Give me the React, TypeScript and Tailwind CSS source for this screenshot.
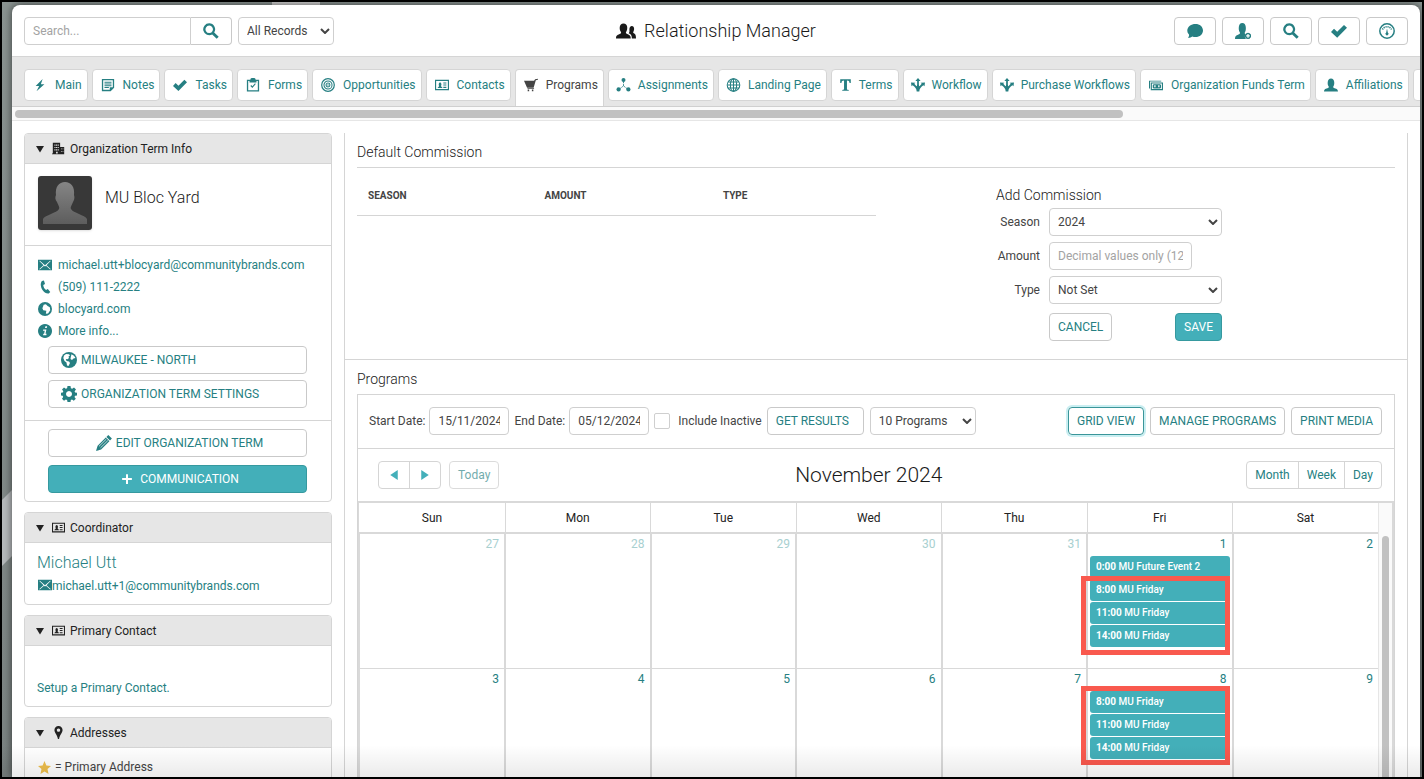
import type { ReactNode } from "react";

const icons: Record<string, ReactNode> = {
  bolt: <path d="M11 1 3 9h4l-3 6 9-8H9z" />,
  notes: (
    <path
      fillRule="evenodd"
      d="M1 1h14v10l-4 4H1zm1.500 1.500v11h7.500v-3h3.500v-8zM4 4.200h8v1.100H4zm0 2h8v1.100H4zm0 2h8v1.100H4zm0 2h5v1.100H4z"
    />
  ),
  check: <path d="m0 9 3-3.200L6.200 8.800 13 2l3 2.800L6.200 14.800z" />,
  clipboard: (
    <path
      fillRule="evenodd"
      d="M1 2h4c0-1 .8-2 1.500-2h3C10.200 0 11 1 11 2h4v13.500H1zm1.500 1.500V14h11V3.500h-1.500V5H4V3.500zM5 9l.9-.9 1.400 1.400L10.300 6l.9.8-3.900 4.500z"
    />
  ),
  target: (
    <g fill="none" stroke="currentColor">
      <circle cx="8" cy="8" r="7.200" strokeWidth="1.400" />
      <circle cx="8" cy="8" r="4.600" strokeWidth="1.200" />
      <circle cx="8" cy="8" r="2.200" strokeWidth="1.200" />
      <circle cx="8" cy="8" r=".8" fill="currentColor" stroke="none" />
    </g>
  ),
  card: (
    <path
      fillRule="evenodd"
      d="M0 2h16v12H0zm1.300 1.300v9.400h13.400V3.300zM3 11.500c0-1.600 1.700-1.300 1.700-2.500C4 8 4 5 5.800 5S7.600 8 6.900 9c0 1.200 1.700.9 1.700 2.500zM9.500 5H13v1.300H9.500zm0 2.500H13v1.200H9.500zm0 2.500H13v1.300H9.500z"
    />
  ),
  cart: (
    <path d="M0 3h11.500l1.200-1.600 3-.6.300 1.100-2.500.7L11 11H3.500zM4 11.700h7.500v1H4zM4.200 13.200h1.700V15H4.200zm4.800 0h1.700V15H9z" />
  ),
  nodes: (
    <g>
      <circle cx="8" cy="2.400" r="2.300" />
      <circle cx="2.400" cy="13" r="2.400" />
      <circle cx="13.600" cy="13" r="2.400" />
      <path d="M8 4v5l-5 4m5-4 5 4" fill="none" stroke="currentColor" strokeDasharray="2 1" />
    </g>
  ),
  globe: (
    <g fill="none" stroke="currentColor" strokeWidth="1.200">
      <circle cx="8" cy="8" r="7.200" />
      <ellipse cx="8" cy="8" rx="3.600" ry="7.200" />
      <path d="M8 1v14M1 8h14M2 4.500h12M2 11.500h12" />
    </g>
  ),
  letter: (
    <path d="M1.500 1h13v4.500H13C12.800 3.500 12 2.600 9.800 2.600v10.200c0 .8.700 1 2.200 1.200v1H4v-1c1.500-.2 2.200-.4 2.200-1.200V2.600C4 2.600 3.200 3.500 3 5.500H1.500z" />
  ),
  workflow: (
    <path d="m8 0 3 3.500H9V7c0 1.500.3 2 1 2.300C11 8 11.500 7.300 12.300 6.700L11 5.300l5-.3-.6 4.500-1.300-1.200C11.500 10.500 9.500 12 9.500 15.500h-3C6.500 12 4.500 10.500 1.900 8.300L.6 9.500 0 5l5 .3-1.300 1.400C4.500 7.300 5 8 6 9.300 6.700 9 7 8.500 7 7V3.500H5z" />
  ),
  money: (
    <path
      fillRule="evenodd"
      d="M0 3h14v1H1.200v8H0zm2 2h14v9H2zm1.300 1.300v6.400h11.400V6.300zM4.300 8l1-1h7.400l1 1v3l-1 1H5.300l-1-1zM6 8.300v2.400h1.500V8.300zm4.500 0v2.400H12V8.300z"
    />
  ),
  user: (
    <path d="M0 15.500c.2-3.500 2-3 5-4.500.6-.4.700-1.200 0-2C3.800 7.500 3.400.5 8 .5S12.200 7.500 11 9c-.7.8-.6 1.600 0 2 3 1.500 4.800 1 5 4.500z" />
  ),
  userAdd: (
    <g>
      <path d="M0 16c.2-3.800 1.500-3.500 4.500-5 .6-.4.700-1.300 0-2.200C3.400 7 3 0 7.300 0s4 7 2.900 8.800c-.8 1-.5 1.900.2 2.300-.8 1.500-.7 3.400.6 4.900z" />
      <path
        fillRule="evenodd"
        d="M13 9.800a3.100 3.100 0 1 0 .01 0zm-.6 1.300h1.200v1.200h1.200v1.200h-1.200v1.200h-1.200v-1.200h-1.200v-1.200h1.200z"
      />
    </g>
  ),
  users: (
    <path d="M0 14c0-3 1.500-2.700 3.700-4 .5-.3.500-1 0-1.600C2.600 6.800 2.300 2 6 2s3.400 4.800 2.300 6.400c-.5.6-.5 1.300 0 1.600 2.200 1.300 3.400 1 3.500 4zm12.700 0c0-2.500-.8-3.600-2.500-4.300.8-1 .6-1.700.5-2.800 0-2 .8-2.900 2-2.900 2.300 0 2 3.300 1.300 4.400-.4.600-.3 1 0 1.200 1.500.9 2 1.400 2 4.400z" />
  ),
  search: (
    <path
      fillRule="evenodd"
      d="M6.200.3a6 6 0 0 1 5 9.200l4.500 4.200-2 2.100-4.500-4.300A6 6 0 1 1 6.200.3zm0 2.300a3.700 3.700 0 1 0 .01 0z"
    />
  ),
  comment: (
    <path d="M8.500 1C12.700 1 16 3.700 16 7.500S12.700 14 8.500 14c-1.200 0-2.200-.2-3.200-.6-1.200.9-3 1.500-4.500 1.300C2 13.800 2.200 12.800 2 11.500.8 10.400.3 9 .3 7.500.3 3.700 4.200 1 8.500 1z" />
  ),
  gauge: (
    <g>
      <circle cx="8" cy="8" r="7.200" fill="none" stroke="currentColor" strokeWidth="1.500" />
      <path
        d="M3.500 6.500A5 5 0 0 1 12.500 6.500"
        fill="none"
        stroke="currentColor"
        strokeWidth="1.600"
        strokeDasharray="1.200 .8"
      />
      <path d="m8 5.500.8 4a1.500 1.500 0 1 1-1.600 0z" />
    </g>
  ),
  building: (
    <path
      fillRule="evenodd"
      d="M1 1h9v5h5v9H0v-1h1zm2 2v1.500h1.300V3zm2 0v1.500h1.300V3zm2 0v1.500h1.300V3zM3 6v1.500h1.300V6zm2 0v1.500h1.300V6zm2 0v1.500h1.300V6zM3 9v1.500h1.300V9zm2 0v1.500h1.300V9zm2 0v1.500h1.300V9zm4-1v1h1V8zm2 0v1h1V8zm-2 3v1h1v-1zm2 0v1h1v-1zm-8 1v2h2v-2z"
    />
  ),
  mail: (
    <path
      fillRule="evenodd"
      d="M0 2h16v12H0zm1.500 1.500 4.800 4.700-4.800 4.300.5.500 4.900-4.200L8 9.700l1.100-.9 4.900 4.200.5-.5-4.800-4.300 4.800-4.700-.6-.5L8 8.300 2.100 3z"
    />
  ),
  phone: (
    <path d="M4.500 1 6.800.5 8 4.500l-2 1.200c.2 2.400 1.400 4.500 3.200 5.700l2-1L14 13.800 12.300 15.500C6 16.500.5 6 4.500 1z" />
  ),
  earth: (
    <g>
      <circle cx="8" cy="8" r="8" />
      <path
        fill="#fff"
        d="M3 3.500 5 2l3 .3 1 1.200-1.500 1L8 6 6.500 7.200 4.800 7 5.500 9l2.500.5 1 1.500-1.500 3L6 13.500 5.500 10.500 3.500 9 2.300 6zM10.500 2.300l2.500 1.500L14.500 6l-2 .5L11 8l-1.500-1 .3-2z"
      />
    </g>
  ),
  globeLink: (
    <g>
      <circle cx="8" cy="8" r="8" />
      <path fill="#fff" d="M6.500 3 9 2.500l2 2 2.500 1.500.5 3.500-2.500 3.500L9 13.500 9.500 10 6 9.500 5 7z" />
    </g>
  ),
  info: (
    <path
      fillRule="evenodd"
      d="M8 0a8 8 0 1 0 .01 0zm.5 2.500h2l-.5 2.200H8zM6 6.200h3.600l-1 5h1.200l-.3 1.600H5.800l.3-1.600h.9l.7-3.400H5.700z"
    />
  ),
  gear: (
    <path
      fillRule="evenodd"
      d="M6.500 0h3l.4 2.200 1.300.5L13 1.400 15 3.500l-1.400 1.700.5 1.300 1.900.2v2.800l-1.900.3-.6 1.300 1.300 1.700-2 2-1.800-1.200-1.200.5L9.500 16h-3l-.4-2-1.300-.4L3 14.800l-2-2 1.200-1.700-.5-1.300L0 9.500V6.700l1.800-.3.500-1.200L1 3.500l2-2 1.700 1.200 1.400-.5zM8 5a3 3 0 1 0 .01 0z"
    />
  ),
  pencil: (
    <g>
      <path d="m12.300 0 3.600 3.500-1.900 2L10.400 2zM9.800 2.600l3.600 3.600-8.300 8.200L0 16l1.600-5.200z" />
      <path d="m3 11.300 7.300-7.200M4.500 12.800l7.300-7.200" stroke="#fff" strokeWidth=".7" />
    </g>
  ),
  plus: <path d="M6.700 1.500h2.600v5.200h5.200v2.600H9.300v5.200H6.700V9.300H1.500V6.700h5.200z" />,
  pin: (
    <path
      fillRule="evenodd"
      d="M8 0c3 0 5 2.200 5 5 0 3.500-3.500 6-4.300 11H7.300C6.500 11 3 8.500 3 5c0-2.800 2-5 5-5zm0 3a2.100 2.100 0 1 0 .01 0z"
    />
  ),
  star: <path d="m8 0 2.300 5.400 5.700.6-4.300 3.900L13 16l-5-3.200L3 16l1.300-6.100L0 6l5.700-.6z" />,
  down: <path d="M0 2h16L8 15z" />,
  left: <path d="M14 0v16L2 8z" />,
  right: <path d="M2 0v16l12-8z" />,
};

function Icon({ name, className = "size-4" }: { name: string; className?: string }) {
  return (
    <svg viewBox="0 0 16 16" fill="currentColor" aria-hidden="true" className={`shrink-0 ${className}`}>
      {icons[name]}
    </svg>
  );
}

const button =
  "flex h-7 items-center rounded border border-[#c9c9c9] bg-white px-2 text-[#267f82] whitespace-nowrap";
const field = "h-7 w-full rounded border border-[#cfcfcf] bg-white px-2 text-[#444] placeholder:text-[#a3a3a3]";

function Select({ id, label, value, className }: { id: string; label?: string; value: string; className: string }) {
  return (
    <div className={`relative ${className}`}>
      <select id={id} aria-label={label} defaultValue={value} className={`${field} appearance-none`}>
        <option>{value}</option>
      </select>
      <svg
        viewBox="0 0 10 6"
        aria-hidden="true"
        className="pointer-events-none absolute top-[11px] right-1 h-[6px] w-[10px] fill-none stroke-[#444] stroke-2"
      >
        <path d="m1 1 4 4 4-4" />
      </svg>
    </div>
  );
}

const tabs = [
  { icon: "bolt", label: "Main" },
  { icon: "notes", label: "Notes" },
  { icon: "check", label: "Tasks" },
  { icon: "clipboard", label: "Forms" },
  { icon: "target", label: "Opportunities" },
  { icon: "card", label: "Contacts" },
  { icon: "cart", label: "Programs", active: true },
  { icon: "nodes", label: "Assignments", size: "h-[14px] w-[15px]" },
  { icon: "globe", label: "Landing Page", size: "h-[14px] w-[15px]" },
  { icon: "letter", label: "Terms", size: "h-[14px] w-[13px]" },
  { icon: "workflow", label: "Workflow", size: "size-[14px]" },
  { icon: "workflow", label: "Purchase Workflows", size: "size-[14px]" },
  { icon: "money", label: "Organization Funds Term" },
  { icon: "user", label: "Affiliations" },
];

const actions = [
  { icon: "comment", label: "Messages" },
  { icon: "userAdd", label: "Add person" },
  { icon: "search", label: "Find" },
  { icon: "check", label: "Tasks" },
  { icon: "gauge", label: "Dashboard" },
];

function Header() {
  return (
    <header className="flex items-center border-b border-[#d5d5d5] px-3 pt-3 pb-[11px]">
      <div className="flex flex-1 gap-[6px]">
        <div className="flex">
          <input
            aria-label="Search"
            placeholder="Search..."
            className="h-7 w-[167px] rounded-l border border-[#cfcfcf] px-2 placeholder:text-[#a3a3a3]"
          />
          <button
            aria-label="Search"
            className="flex h-7 w-[41px] items-center justify-center rounded-r border border-l-0 border-[#c9c9c9] text-[#267f82]"
          >
            <Icon name="search" />
          </button>
        </div>
        <Select id="records" label="Records" value="All Records" className="w-24" />
      </div>
      <h1 className="flex items-center gap-2 text-lg leading-7 font-light text-[#1a1a1a]">
        <Icon name="users" className="size-5" />
        Relationship Manager
      </h1>
      <div className="flex flex-1 justify-end gap-[6px]">
        {actions.map((action) => (
          <button
            key={action.label}
            aria-label={action.label}
            className="flex h-7 w-[42px] items-center justify-center rounded border border-[#c9c9c9] text-[#267f82]"
          >
            <Icon name={action.icon} />
          </button>
        ))}
      </div>
    </header>
  );
}

function Tabs() {
  return (
    <nav>
      <div className="flex gap-1 overflow-hidden border-b border-[#cfcfcf] bg-[#e6e6e6] pt-3 pl-3">
        {tabs.map((tab) => (
          <a
            key={tab.label}
            href="#"
            className={`flex shrink-0 items-center gap-[7px] border bg-white pr-[5px] pl-[7px] ${
              tab.active
                ? "-mb-px h-[38px] rounded-t border-[#d5d5d5] border-b-white pb-[6px] text-[#444]"
                : "h-8 rounded border-[#d5d5d5] text-[#267f82]"
            }`}
          >
            <Icon name={tab.icon} className={tab.size ?? "h-[14px] w-4"} />
            {tab.label}
          </a>
        ))}
        <a href="#" aria-label="More tabs" className="h-8 w-16 shrink-0 rounded border border-[#d5d5d5] bg-white" />
      </div>
      <div className="border-b border-[#e6e6e6] bg-[#fafafa] px-[3px] pt-[3px] pb-[2px]">
        <div className="h-2 w-[79%] rounded-full bg-[#c1c1c1]" />
      </div>
    </nav>
  );
}

function Panel({ icon, title, children }: { icon: string; title: string; children: ReactNode }) {
  return (
    <section className="overflow-hidden rounded border border-[#d5d5d5]">
      <h2 className="flex h-[30px] items-center border-b border-[#d5d5d5] bg-[#e6e6e6] pl-[11px] text-[#222]">
        <Icon name="down" className="size-2" />
        <Icon name={icon} className="mr-[5px] ml-2 size-[13px]" />
        {title}
      </h2>
      {children}
    </section>
  );
}

const contactLinks = [
  { icon: "mail", text: "michael.utt+blocyard@communitybrands.com" },
  { icon: "phone", text: "(509) 111-2222" },
  { icon: "globeLink", text: "blocyard.com" },
  { icon: "info", text: "More info..." },
];

function Sidebar() {
  return (
    <aside className="flex w-[308px] shrink-0 flex-col gap-[10px]">
      <Panel icon="building" title="Organization Term Info">
        <div className="flex gap-3 border-b border-[#d5d5d5] px-3 pt-[11px] pb-[14px]">
          <svg viewBox="0 0 54 54" role="img" aria-label="MU Bloc Yard" className="m-px size-[54px] rounded-[3px] shadow">
            <defs>
              <linearGradient id="person" x2="0" y2="1">
                <stop offset="0" stopColor="#858585" />
                <stop offset="1" stopColor="#5d5d5d" />
              </linearGradient>
            </defs>
            <path d="M0 0h54v54H0z" fill="#383838" />
            <path
              d="M5 48v-5c2-4 14-6 16-10 1-2-1-4-2-7-2-2-2-5-1-7-1-8 3-13 9-13s10 5 9 13c1 3 0 5-1 7-1 3-3 5-2 7 2 4 14 6 16 10v5z"
              fill="url(#person)"
            />
          </svg>
          <p className="pt-[13px] text-base leading-5 font-light text-[#1a1a1a]">MU Bloc Yard</p>
        </div>
        <div className="border-b border-[#d5d5d5] px-3 pt-2 pb-3">
          <ul className="mb-1">
            {contactLinks.map((link) => (
              <li key={link.text} className="flex h-[22px] items-center gap-[6px] pl-px text-[#267f82]">
                <Icon name={link.icon} className="size-[14px]" />
                <a href="#">{link.text}</a>
              </li>
            ))}
          </ul>
          <div className="mr-3 ml-[11px] flex flex-col gap-[6px]">
            <button className={`${button} gap-1 pl-3`}>
              <Icon name="earth" />
              MILWAUKEE - NORTH
            </button>
            <button className={`${button} gap-1 pl-3`}>
              <Icon name="gear" />
              ORGANIZATION TERM SETTINGS
            </button>
          </div>
        </div>
        <div className="mr-6 ml-[23px] flex flex-col gap-2 py-2">
          <button className={`${button} justify-center gap-1 pl-3`}>
            <Icon name="pencil" />
            EDIT ORGANIZATION TERM
          </button>
          <button className="flex h-7 items-center justify-center gap-[7px] rounded border border-[#36999f] bg-[#43afb9] pl-[5px] text-white">
            <Icon name="plus" className="size-3" />
            COMMUNICATION
          </button>
        </div>
      </Panel>
      <Panel icon="card" title="Coordinator">
        <div className="px-3 pt-[10px] pb-[10px] text-[#267f82]">
          <a href="#" className="block text-base leading-5 font-light">
            Michael Utt
          </a>
          <a href="#" className="flex items-start pt-[5px] pl-px leading-4">
            <Icon name="mail" className="size-[14px]" />
            michael.utt+1@communitybrands.com
          </a>
        </div>
      </Panel>
      <Panel icon="card" title="Primary Contact">
        <div className="px-3 pt-[33px] pb-[9px] leading-[18px] text-[#267f82]">
          <a href="#">Setup a Primary Contact.</a>
        </div>
      </Panel>
      <Panel icon="pin" title="Addresses">
        <p className="flex items-center gap-1 px-[13px] pt-[11px] pb-4 leading-4 text-[#444]">
          <Icon name="star" className="size-[13px] text-[#eebf4d]" />= Primary Address
        </p>
      </Panel>
    </aside>
  );
}

function Commission() {
  return (
    <section className="border-b border-[#d5d5d5] px-3 pt-[9px] pb-[18px]">
      <h2 className="border-b border-[#d5d5d5] pb-[5px] text-sm font-light text-[#1a1a1a]">Default Commission</h2>
      <div className="flex">
        <table className="h-12 w-1/2 table-fixed self-start text-left text-[10px] text-[#444]">
          <thead>
            <tr className="border-b border-[#d5d5d5]">
              <th className="w-[34%] pt-2 pl-[11px]">SEASON</th>
              <th className="w-[34%] pt-2 pl-[11px]">AMOUNT</th>
              <th className="pt-2 pl-[13px]">TYPE</th>
            </tr>
          </thead>
        </table>
        <form className="ml-[120px] w-[226px] pt-[17px]">
          <h3 className="mb-[3px] text-sm leading-5 font-light text-[#1a1a1a]">Add Commission</h3>
          <div className="grid grid-cols-[44px_173px] items-center gap-x-[9px] gap-y-[6px] text-[#444]">
            <label htmlFor="season" className="text-right">
              Season
            </label>
            <Select id="season" value="2024" className="w-full" />
            <label htmlFor="amount" className="text-right">
              Amount
            </label>
            <input id="amount" placeholder="Decimal values only (12.5)" className={`${field} max-w-[143px]`} />
            <label htmlFor="type" className="text-right">
              Type
            </label>
            <Select id="type" value="Not Set" className="w-full" />
          </div>
          <div className="mt-[9px] ml-[53px] flex justify-between">
            <button type="button" className={button}>
              CANCEL
            </button>
            <button type="button" className="h-7 rounded border border-[#36999f] bg-[#43afb9] px-2 text-white">
              SAVE
            </button>
          </div>
        </form>
      </div>
    </section>
  );
}

function Filters() {
  return (
    <div className="flex items-center gap-[5px] border-b border-[#d5d5d5] pt-3 pr-3 pb-[13px] pl-[11px] text-[#444]">
      <div className="flex items-center gap-1">
        <label htmlFor="start">Start Date:</label>
        <input id="start" defaultValue="15/11/2024" className="h-7 w-20 rounded border border-[#cfcfcf] px-2" />
      </div>
      <div className="flex items-center gap-1">
        <label htmlFor="end">End Date:</label>
        <input id="end" defaultValue="05/12/2024" className="h-7 w-20 rounded border border-[#cfcfcf] px-2" />
      </div>
      <label className="flex items-center gap-2">
        <input type="checkbox" className="size-4 appearance-none rounded-xs border border-[#cfcfcf]" />
        Include Inactive
      </label>
      <div className="flex gap-[6px]">
        <button className={`${button} w-[97px]`}>GET RESULTS</button>
        <Select id="count" label="Programs shown" value="10 Programs" className="w-[106px]" />
      </div>
      <div className="ml-auto flex gap-[6px]">
        <button className="h-7 rounded border border-[#3a9599] px-2 text-[#267f82] ring-2 ring-[#c9eef1]">
          GRID VIEW
        </button>
        <button className={button}>MANAGE PROGRAMS</button>
        <button className={button}>PRINT MEDIA</button>
      </div>
    </div>
  );
}

const days = ["Sun", "Mon", "Tue", "Wed", "Thu", "Fri", "Sat"];

const friday = [
  { time: "8:00", name: "MU Friday" },
  { time: "11:00", name: "MU Friday" },
  { time: "14:00", name: "MU Friday" },
];

type Cell = { day: number; muted?: boolean; events?: typeof friday; mark?: string };

const weeks: Cell[][] = [
  [
    { day: 27, muted: true },
    { day: 28, muted: true },
    { day: 29, muted: true },
    { day: 30, muted: true },
    { day: 31, muted: true },
    { day: 1, events: [{ time: "0:00", name: "MU Future Event 2" }, ...friday], mark: "top-[42px]" },
    { day: 2 },
  ],
  [
    { day: 3 },
    { day: 4 },
    { day: 5 },
    { day: 6 },
    { day: 7 },
    { day: 8, events: friday, mark: "top-[17px]" },
    { day: 9 },
  ],
];

function Calendar() {
  return (
    <div>
      <div className="flex items-center justify-between pt-3 pr-3 pb-3 pl-5">
        <div className="flex gap-2">
          <div className="flex h-7 divide-x divide-[#d5d5d5] rounded border border-[#d5d5d5] text-[#43afb9]">
            <button aria-label="Previous" className="px-[10px]">
              <Icon name="left" className="size-[10px]" />
            </button>
            <button aria-label="Next" className="px-[10px]">
              <Icon name="right" className="size-[10px]" />
            </button>
          </div>
          <button disabled className={`${button} opacity-65`}>
            Today
          </button>
        </div>
        <h3 className="mr-2 text-[21px] leading-7 font-light text-[#1a1a1a]">November 2024</h3>
        <div className="flex h-7 divide-x divide-[#d5d5d5] rounded border border-[#d5d5d5] text-[#267f82]">
          <button className="px-2">Month</button>
          <button className="px-2">Week</button>
          <button className="px-2">Day</button>
        </div>
      </div>
      <div className="flex border-2 border-b-0 border-l border-[#d9d9d9]">
        <div className="min-w-0 flex-1">
          <table className="w-full table-fixed border-collapse">
            <thead>
              <tr className="h-[30px] border-b-2 border-[#d9d9d9]">
                {days.map((day) => (
                  <th key={day} className="border-l border-[#d9d9d9] font-normal text-[#222] first:border-l-0">
                    {day}
                  </th>
                ))}
              </tr>
            </thead>
            <tbody>
              {weeks.map((week) => (
                <tr key={week[0].day} className="h-[135px] border-b border-[#d9d9d9]">
                  {week.map((cell) => (
                    <td key={cell.day} className="relative border-l-2 border-[#d9d9d9] p-0 align-top first:border-l">
                      <p
                        className={`h-[22px] pt-[2px] pr-[5px] text-right leading-4 ${
                          cell.muted ? "text-[#a8d0d0]" : "text-[#267f82]"
                        }`}
                      >
                        {cell.day}
                      </p>
                      <div className="mx-[2px] flex flex-col gap-px">
                        {cell.events?.map((event) => (
                          <a
                            key={event.time}
                            href="#"
                            className="h-[22px] rounded-[3px] bg-[#43afb9] pl-[6px] text-[10px] leading-[21px] font-medium text-white"
                          >
                            <b>{event.time}</b> {event.name}
                          </a>
                        ))}
                      </div>
                      {cell.mark && (
                        <div
                          className={`absolute right-[2px] -left-[7px] h-[79px] border-5 border-[#f9594e] ${cell.mark}`}
                        />
                      )}
                    </td>
                  ))}
                </tr>
              ))}
            </tbody>
          </table>
        </div>
        <div className="w-[14px] border-l border-[#e6e6e6] bg-[#fafafa] px-[3px] pt-[33px]">
          <div className="h-full rounded-t-full bg-[#c1c1c1]" />
        </div>
      </div>
    </div>
  );
}

// Part of the page behind the modal that shows at its left and top edges
function Backdrop() {
  return (
    <>
      <svg viewBox="0 0 10 76" className="absolute top-[488px] left-0 h-[76px] w-[10px]" aria-hidden="true">
        <path d="M0 10 10 0v66L0 76z" fill="#b5b9bb" />
      </svg>
      <div className="absolute top-0 left-[270px] h-[3px] w-12 bg-[#d0d0d0]" />
    </>
  );
}

export default function App() {
  return (
    <div className="relative h-screen overflow-hidden border-2 border-black bg-[#8a9391] bg-linear-to-b from-[#8a9391] to-[#7b8382] pt-[3px] pr-[2px] pl-[10px] font-[Roboto,sans-serif] text-xs">
      <Backdrop />
      <div className="relative h-full overflow-hidden rounded-t-lg bg-white shadow-[0_0_8px_rgba(0,0,0,0.6)]">
        <Header />
        <Tabs />
        <div className="flex gap-3 px-3 pt-3">
          <Sidebar />
          <main className="min-w-0 flex-1 border-x border-[#d5d5d5]">
            <Commission />
            <section className="px-3 pt-[9px]">
              <h2 className="pb-[5px] text-sm font-light text-[#1a1a1a]">Programs</h2>
              <div className="border border-[#d5d5d5]">
                <Filters />
                <Calendar />
              </div>
            </section>
          </main>
        </div>
      </div>
      <div className="pointer-events-none absolute inset-x-0 bottom-0 h-8 bg-linear-to-b from-transparent to-black/8" />
    </div>
  );
}
